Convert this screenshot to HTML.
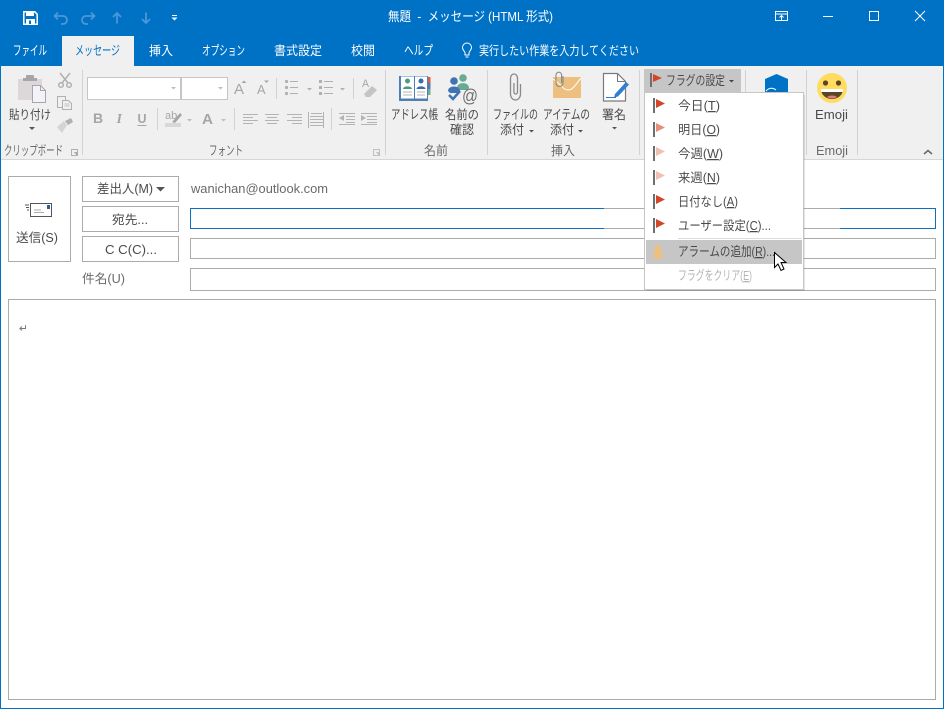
<!DOCTYPE html>
<html lang="ja"><head><meta charset="utf-8"><title>無題 - メッセージ (HTML 形式)</title>
<style>
html,body{margin:0;padding:0;width:944px;height:709px;overflow:hidden;background:#fff}
svg{display:block}
text{font-family:"Liberation Sans","Noto Sans CJK JP",sans-serif;font-size:12.5px;fill:#4a4a4a;white-space:pre}
text.k{font-size:13px}
text.w{fill:#fff}
text.d{fill:#a6a6a6}
text.g{fill:#6a6a6a}
text.b{font-weight:bold;fill:#a6a6a6;font-size:14px}
.l{stroke:#ababab;stroke-width:1;fill:none}
.sep{stroke:#d2d2d2;stroke-width:1}
</style></head><body>
<svg width="944" height="709" viewBox="0 0 944 709" xmlns="http://www.w3.org/2000/svg">
<rect width="944" height="709" fill="#fff"/>
<rect width="944" height="66" fill="#0072c6"/>
<rect x="0" y="66" width="944" height="93" fill="#f0f0f0"/>
<rect x="0" y="159" width="944" height="1" fill="#d6d6d6"/>
<rect x="0" y="0" width="1" height="709" fill="#0072c6"/>
<rect x="943" y="0" width="1" height="709" fill="#0072c6"/>
<rect x="0" y="708" width="944" height="1" fill="#0072c6"/>
<rect x="62" y="36" width="72" height="30" fill="#f0f0f0"/>

<!-- QAT -->
<path d="M23.800 11.800h11l2.400 2.400v10h-13.400z" fill="none" stroke="#fff" stroke-width="1.500"/>
<rect x="26" y="11" width="8" height="5" fill="#fff"/><rect x="26" y="19" width="9" height="5" fill="#fff"/><rect x="29" y="20.500" width="2" height="3.500" fill="#0072c6"/>
<g fill="none" stroke="#4d97d8" stroke-width="1.800">
<path d="M55 16h8a3.800 3.800 0 0 1 0 8h-2M58 12.500 54.500 16l3.500 3.500"/>
<path d="M94 16h-8a3.800 3.800 0 0 0 0 8h2M91 12.500 94.500 16 91 19.500"/>
<path d="M117 23.500V13M113 17l4-4 4 4"/>
<path d="M146 12.500V23M142 19l4 4 4-4"/>
</g>
<rect x="172" y="15" width="5" height="1" fill="#fff"/><path d="M171.500 17.500h6l-3 3z" fill="#fff"/>

<!-- title -->
<text class="w k" x="388" y="21" textLength="165" lengthAdjust="spacingAndGlyphs">無題  -  メッセージ (HTML 形式)</text>
<!-- window buttons -->
<g fill="none" stroke="#fff" stroke-width="1">
<rect x="775.500" y="11.500" width="12" height="9"/><path d="M776 14h11M781.500 20v-4M779.500 17.500l2-2 2 2"/>
<path d="M823 16.500h10"/>
<rect x="869.500" y="11.500" width="9" height="9"/>
<path d="M915 11l10 10M925 11l-10 10"/>
</g>
<!-- tabs -->
<text class="w k" x="13" y="55" textLength="34" lengthAdjust="spacingAndGlyphs">ファイル</text>
<text class="k" x="75" y="55" textLength="45" lengthAdjust="spacingAndGlyphs" style="fill:#0072c6">メッセージ</text>
<text class="w" x="149" y="55" textLength="24" lengthAdjust="spacingAndGlyphs">挿入</text>
<text class="w k" x="202" y="55" textLength="43" lengthAdjust="spacingAndGlyphs">オプション</text>
<text class="w" x="274" y="55" textLength="48" lengthAdjust="spacingAndGlyphs">書式設定</text>
<text class="w" x="351" y="55" textLength="24" lengthAdjust="spacingAndGlyphs">校閲</text>
<text class="w k" x="404" y="55" textLength="29" lengthAdjust="spacingAndGlyphs">ヘルプ</text>
<g fill="none" stroke="#fff" stroke-width="1"><path d="M465 55v-2c0-1.500-2.500-3-2.500-5.500a4.500 4.500 0 0 1 9 0c0 2.500-2.500 4-2.500 5.500v2zM465.500 57h3"/></g>
<text class="w" x="479" y="55" textLength="160" lengthAdjust="spacingAndGlyphs">実行したい作業を入力してください</text>

<!-- ribbon separators -->
<g class="sep"><path d="M82.500 70v85M385.500 70v85M487.500 70v85M639.500 70v85M745.500 70v85M806.500 70v85M857.500 70v85"/></g>

<!-- clipboard -->
<path d="M18 79h24v21H18z" fill="#dcd8d9"/>
<rect x="26" y="75" width="8" height="4" rx="1" fill="#a9a5a6"/><rect x="23" y="78" width="14" height="3" fill="#a9a5a6"/>
<path d="M32.500 85.500h8l5 5v12h-13z" fill="#f2f2f8" stroke="#a9a5ad"/>
<path d="M40.500 85.500v5h5" fill="none" stroke="#a9a5ad"/>
<g fill="none" stroke="#b0b0b0" stroke-width="1.500"><path d="M60 73l8 10M70 73l-8 10"/><circle cx="61" cy="85" r="2.300"/><circle cx="69" cy="85" r="2.300"/></g>
<g fill="#f0f0f0" stroke="#b0b0b0"><path d="M57.500 96.500h8v11h-8z"/><path d="M62.500 100.500h6l3 3v6h-9z"/></g>
<path d="M64.500 104h5M64.500 106h5" stroke="#c0c0c0"/>
<path d="M57 127l7-6 3 4-5 8z" fill="#d4d4d4"/><path d="M65 121l6-3 2 4-5 3z" fill="#b0b0b0"/>
<text x="9" y="119" textLength="42" lengthAdjust="spacingAndGlyphs">貼り付け</text>
<path d="M29 127h6l-3 3z" fill="#555"/>
<text class="g k" x="4" y="155" textLength="59" lengthAdjust="spacingAndGlyphs">クリップボード</text>
<path d="M71.500 149.500h6v6h-6z" fill="none" stroke="#b0b0b0"/><path d="M74 152l3 3v-2.500h-2.500" fill="#999" stroke="#999" stroke-width=".5"/>

<!-- font group -->
<rect x="87.500" y="77.500" width="93" height="22" fill="#fff" stroke="#c6c6c6"/>
<rect x="181.500" y="77.500" width="46" height="22" fill="#fff" stroke="#c6c6c6"/>
<path d="M171 87h5l-2.500 2.500zM218 87h5l-2.500 2.500z" fill="#bdbdbd"/>
<text class="d" style="font-size:15px" x="234" y="94" textLength="10" lengthAdjust="spacingAndGlyphs">A</text>
<path d="M241.500 83l2.500-2.500 2.500 2.500z" fill="#a6a6a6"/>
<text class="d" style="font-size:13px" x="257" y="94" textLength="8.500" lengthAdjust="spacingAndGlyphs">A</text>
<path d="M264 80.500h5l-2.500 2.500z" fill="#a6a6a6"/>
<path d="M276.500 78v21" class="sep"/>
<g fill="#b0b0b0"><circle cx="286.500" cy="81.500" r="1.600"/><circle cx="286.500" cy="87.500" r="1.600"/><circle cx="286.500" cy="93.500" r="1.600"/><rect x="290" y="81" width="8" height="1"/><rect x="290" y="87" width="8" height="1"/><rect x="290" y="93" width="8" height="1"/>
<path d="M307 88h5l-2.500 2.500zM340 88h5l-2.500 2.500z"/>
<rect x="319" y="80" width="3" height="3"/><rect x="319" y="86" width="3" height="3"/><rect x="319" y="92" width="3" height="3"/><rect x="324" y="81" width="9" height="1"/><rect x="324" y="87" width="9" height="1"/><rect x="324" y="93" width="9" height="1"/></g>
<path d="M353.500 78v21" class="sep"/>
<text class="d" style="font-size:11px" x="362" y="87" textLength="7" lengthAdjust="spacingAndGlyphs">A</text>
<path d="M364 94l8-8 5 4-7 7h-4z" fill="#c4c4c4"/>

<text class="b" x="93" y="123">B</text>
<text class="b" x="116.500" y="123" style="font-family:'Liberation Serif',serif;font-style:italic">I</text>
<text class="b" x="137.500" y="123" textLength="9" lengthAdjust="spacingAndGlyphs" style="font-size:13px">U</text><rect x="137.500" y="125" width="9" height="1" fill="#a6a6a6"/>
<path d="M157.500 108v22M234.500 108v22" class="sep"/>
<text class="d" style="font-size:11px" x="165" y="119">ab</text>
<path d="M172 122l8-9 2 2-7 8z" fill="#a6a6a6"/><rect x="165" y="123" width="16" height="4" fill="#d8d8d8"/>
<path d="M187 119h5l-2.500 2.500zM221 119h5l-2.500 2.500z" fill="#bdbdbd"/>
<text class="d" style="font-size:15px;font-weight:bold" x="202" y="124" textLength="11" lengthAdjust="spacingAndGlyphs">A</text>
<g fill="#b4b4b4">
<rect x="243" y="114" width="15" height="1"/><rect x="243" y="117" width="10" height="1"/><rect x="243" y="120" width="15" height="1"/><rect x="243" y="123" width="10" height="1"/>
<rect x="265" y="114" width="14" height="1"/><rect x="267" y="117" width="10" height="1"/><rect x="265" y="120" width="14" height="1"/><rect x="267" y="123" width="10" height="1"/>
<rect x="287" y="114" width="15" height="1"/><rect x="292" y="117" width="10" height="1"/><rect x="287" y="120" width="15" height="1"/><rect x="292" y="123" width="10" height="1"/>
<rect x="310" y="116" width="13" height="1"/><rect x="310" y="119" width="13" height="1"/><rect x="310" y="122" width="13" height="1"/><rect x="310" y="125" width="13" height="1"/>
<rect x="308" y="112" width="1" height="16"/><rect x="323" y="112" width="1" height="16"/>
<rect x="311" y="113" width="11" height="1"/>
<rect x="339" y="113" width="16" height="1"/><rect x="346" y="116" width="9" height="1"/><rect x="346" y="119" width="9" height="1"/><rect x="339" y="124" width="16" height="1"/><rect x="346" y="122" width="9" height="1"/>
<path d="M339 118l5-3v6z"/>
<rect x="361" y="113" width="16" height="1"/><rect x="367" y="116" width="10" height="1"/><rect x="367" y="119" width="10" height="1"/><rect x="361" y="124" width="16" height="1"/><rect x="367" y="122" width="10" height="1"/>
<path d="M366 118l-5-3v6z"/>
</g>
<path d="M331.500 108v22" class="sep"/>
<text class="g k" x="209" y="155" textLength="34" lengthAdjust="spacingAndGlyphs">フォント</text>
<path d="M373.500 149.500h6v6h-6z" fill="none" stroke="#c0c0c0"/><path d="M376 152l3 3v-2.500h-2.500" fill="#bbb" stroke="#bbb" stroke-width=".5"/>

<!-- address book -->
<rect x="399" y="76" width="29" height="25" fill="#4f7fb5"/>
<rect x="401" y="76.500" width="13" height="22" fill="#fff"/>
<rect x="415" y="76.500" width="12" height="22" fill="#fff"/>
<rect x="428" y="77" width="2.500" height="6" fill="#d9603c"/><rect x="428" y="83" width="2.500" height="6" fill="#4f7fb5"/><rect x="428" y="89" width="2.500" height="6" fill="#6fab92"/>
<circle cx="407.500" cy="81" r="2.500" fill="#4b9b80"/><path d="M403 89c0-3.500 9-3.500 9 0z" fill="#4b9b80"/>
<circle cx="421" cy="81" r="2.500" fill="#3a6ea5"/><path d="M416.500 89c0-3.500 9-3.500 9 0z" fill="#3a6ea5"/>
<path d="M403 92h9M403 95h9M417 92h8M417 95h8" stroke="#b4b4b4"/>
<!-- name check -->
<circle cx="463" cy="78" r="3.800" fill="#69aa94"/><path d="M457 88c0-6.500 12-6.500 12 0l-2 2h-8z" fill="#69aa94"/>
<circle cx="454" cy="81" r="3.800" fill="#3f73b2"/><path d="M448 91c0-6 12-6 12 0l-2 2h-8z" fill="#3f73b2"/>
<path d="M449 95l4 4 7-8" fill="none" stroke="#3f73b2" stroke-width="2.500"/>
<text x="462" y="102" style="font-size:18px;fill:#707070" textLength="16" lengthAdjust="spacingAndGlyphs">@</text>
<text class="k" x="391" y="119" textLength="47" lengthAdjust="spacingAndGlyphs">アドレス帳</text>
<text x="445" y="119" textLength="34" lengthAdjust="spacingAndGlyphs">名前の</text>
<text x="450" y="134" textLength="24" lengthAdjust="spacingAndGlyphs">確認</text>
<text class="g" x="424" y="155" textLength="24" lengthAdjust="spacingAndGlyphs">名前</text>

<!-- attach -->
<path d="M520.500 84v10a5 6 0 0 1-10 0V78a3.500 4 0 0 1 7 0v14a1.800 2 0 0 1-3.600 0V83" fill="none" stroke="#8a8a8a" stroke-width="1.300"/>
<rect x="553" y="77" width="28" height="21" fill="#edc07f"/>
<path d="M553 79c8 5 10 11 15 11s8-6 13-12" fill="none" stroke="#fff" stroke-width="1"/>
<path d="M563 76v7a3.500 3.500 0 0 1-7 0v-8a2.800 2.800 0 0 1 5.600 0v8" fill="none" stroke="#8a8a8a" stroke-width="1.100"/>
<path d="M603.500 73.500h14l8 8v19.500h-22z" fill="#fff" stroke="#7a7a7a" stroke-width="1.200"/>
<path d="M617.500 73.500v8h8" fill="none" stroke="#7a7a7a"/>
<path d="M615 94l11-12 3 2.500-11 12-4 1z" fill="#2f7fd0"/><path d="M606 97.500h10" stroke="#2f7fd0" stroke-width="1"/>
<text class="k" x="493" y="119" textLength="45" lengthAdjust="spacingAndGlyphs">ファイルの</text>
<text x="500" y="134" textLength="24" lengthAdjust="spacingAndGlyphs">添付</text>
<path d="M529 130h5l-2.500 2.500z" fill="#555"/>
<text class="k" x="543" y="119" textLength="47" lengthAdjust="spacingAndGlyphs">アイテムの</text>
<text x="550" y="134" textLength="24" lengthAdjust="spacingAndGlyphs">添付</text>
<path d="M578 130h5l-2.500 2.500z" fill="#555"/>
<text x="602" y="119" textLength="24" lengthAdjust="spacingAndGlyphs">署名</text>
<path d="M612 127h5l-2.500 2.500z" fill="#555"/>
<text class="g" x="551" y="155" textLength="24" lengthAdjust="spacingAndGlyphs">挿入</text>

<!-- hexagon -->
<path d="M776.500 74l11.500 5v14h-23V79z" fill="#0072c6"/>
<path d="M766 91c3-3.500 7-3.500 10-1" fill="none" stroke="#fff" stroke-width="1"/>

<!-- emoji -->
<circle cx="832" cy="88" r="15" fill="#ffdc5f"/>
<circle cx="825.500" cy="83" r="2.600" fill="#5a4526"/><circle cx="838.500" cy="83" r="2.600" fill="#5a4526"/>
<path d="M821 89h22c0 6-5 10-11 10s-11-4-11-10z" fill="#5a4526"/>
<rect x="821" y="89" width="22" height="3" fill="#fff"/>
<path d="M827 97c2-2 8-2 10 0-3 2-7 2-10 0z" fill="#e07a8a"/>
<text x="815" y="119" textLength="33" lengthAdjust="spacingAndGlyphs" style="font-size:12.500px">Emoji</text>
<text class="g" x="816" y="155" textLength="32" lengthAdjust="spacingAndGlyphs" style="font-size:12.500px">Emoji</text>
<path d="M924 154l4-3.500 4 3.500" fill="none" stroke="#666" stroke-width="1.500"/>

<!-- send -->
<rect x="8.500" y="176.500" width="62" height="85" class="l"/>
<rect x="30.500" y="203.500" width="21" height="13" fill="#fff" stroke="#555"/>
<rect x="47" y="205" width="3" height="4" fill="#2a5f9e"/>
<path d="M34 210h7M34 212.500h10" stroke="#aaa"/>
<path d="M25 205h4M26 207.500h3M27 210h2" stroke="#555"/>
<text x="16" y="242" textLength="42" lengthAdjust="spacingAndGlyphs">送信(S)</text>

<rect x="82.500" y="176.500" width="96" height="25" class="l"/>
<rect x="82.500" y="206.500" width="96" height="25" class="l"/>
<rect x="82.500" y="236.500" width="96" height="25" class="l"/>
<text x="97" y="193" textLength="56" lengthAdjust="spacingAndGlyphs">差出人(M)</text>
<path d="M156 187h9l-4.500 4.500z" fill="#555"/>
<text class="g" x="191" y="193" textLength="137" lengthAdjust="spacingAndGlyphs" style="font-size:13px">wanichan@outlook.com</text>
<text x="112" y="224" textLength="36" lengthAdjust="spacingAndGlyphs">宛先...</text>
<text x="105" y="254" textLength="52" lengthAdjust="spacingAndGlyphs">C C(C)...</text>
<text class="g" x="82" y="283" textLength="43" lengthAdjust="spacingAndGlyphs">件名(U)</text>

<!-- inputs -->
<rect x="190.500" y="208.500" width="745" height="20" class="l"/>
<path d="M190.500 208.500h413.500M190.500 228.500h413.500M190.500 208v21M840 208.500h95.500v20H840" fill="none" stroke="#106ebe" stroke-width="1"/>
<rect x="190.500" y="238.500" width="745" height="20" class="l"/>
<rect x="190.500" y="268.500" width="745" height="22" class="l"/>
<rect x="8.500" y="299.500" width="927" height="400" class="l"/>
<path d="M25.500 325v3.500H20M22 326.500l-2.200 2 2.200 2" fill="none" stroke="#777" stroke-width=".9"/>

<!-- flag button -->
<rect x="644" y="69" width="97" height="23" fill="#c6c6c6"/>
<rect x="650" y="73" width="2" height="14" fill="#6e6e6e"/>
<path d="M653 74l9 4-9 4z" fill="#d2472b"/>
<text class="k" x="666" y="85" textLength="59" lengthAdjust="spacingAndGlyphs">フラグの設定</text>
<path d="M729 80h5l-2.500 2.500z" fill="#444"/>

<!-- menu -->
<rect x="647" y="95" width="158" height="196" fill="#000" opacity=".1"/>
<rect x="644.500" y="92.500" width="159" height="197" fill="#fff" stroke="#c6c6c6"/>
<rect x="646" y="240" width="156" height="24" fill="#c6c6c6"/>
<rect x="678" y="238" width="124" height="1" fill="#dcdcdc"/>
<g fill="#6e6e6e">
<rect x="653" y="98" width="2" height="15"/><rect x="653" y="122" width="2" height="15"/><rect x="653" y="146" width="2" height="15"/><rect x="653" y="170" width="2" height="15"/><rect x="653" y="194" width="2" height="15"/><rect x="653" y="218" width="2" height="15"/>
</g>
<path d="M656 99l9 4.500-9 4.500z" fill="#d2472b"/>
<path d="M656 123l9 4.500-9 4.500z" fill="#e6907c"/>
<path d="M656 147l9 4.500-9 4.500z" fill="#f0bfb1"/>
<path d="M656 171l9 4.500-9 4.500z" fill="#f0bfb1"/>
<path d="M656 195l9 4.500-9 4.500z" fill="#d2472b"/>
<path d="M656 219l9 4.500-9 4.500z" fill="#d2472b"/>
<path d="M653 256c1.500-1 1.500-3 1.500-5 0-4 1.500-6 3.500-6s3.500 2 3.500 6c0 2 0 4 1.500 5z" fill="#edc07f"/><rect x="652" y="256" width="12" height="1.500" fill="#edc07f"/><rect x="656" y="258" width="4" height="1.500" fill="#edc07f"/>
<text x="678" y="110" textLength="42" lengthAdjust="spacingAndGlyphs">今日(<tspan text-decoration="underline">T</tspan>)</text>
<text x="678" y="134" textLength="42" lengthAdjust="spacingAndGlyphs">明日(<tspan text-decoration="underline">O</tspan>)</text>
<text x="678" y="158" textLength="45" lengthAdjust="spacingAndGlyphs">今週(<tspan text-decoration="underline">W</tspan>)</text>
<text x="678" y="182" textLength="42" lengthAdjust="spacingAndGlyphs">来週(<tspan text-decoration="underline">N</tspan>)</text>
<text x="678" y="206" textLength="60" lengthAdjust="spacingAndGlyphs">日付なし(<tspan text-decoration="underline">A</tspan>)</text>
<text x="678" y="230" textLength="93" lengthAdjust="spacingAndGlyphs">ユーザー設定(<tspan text-decoration="underline">C</tspan>)...</text>
<text class="k" x="678" y="256" textLength="97" lengthAdjust="spacingAndGlyphs">アラームの追加(<tspan text-decoration="underline">R</tspan>)...</text>
<text class="k" x="678" y="280" textLength="74" lengthAdjust="spacingAndGlyphs" style="fill:#b4b4b4">フラグをクリア(<tspan text-decoration="underline">E</tspan>)</text>
<!-- cursor -->
<path d="M774.500 252.500v15l3.500-3.500 3 6.500 3-1.500-3-6.500h5z" fill="#fff" stroke="#000" stroke-width="1"/>
</svg>
</body></html>
